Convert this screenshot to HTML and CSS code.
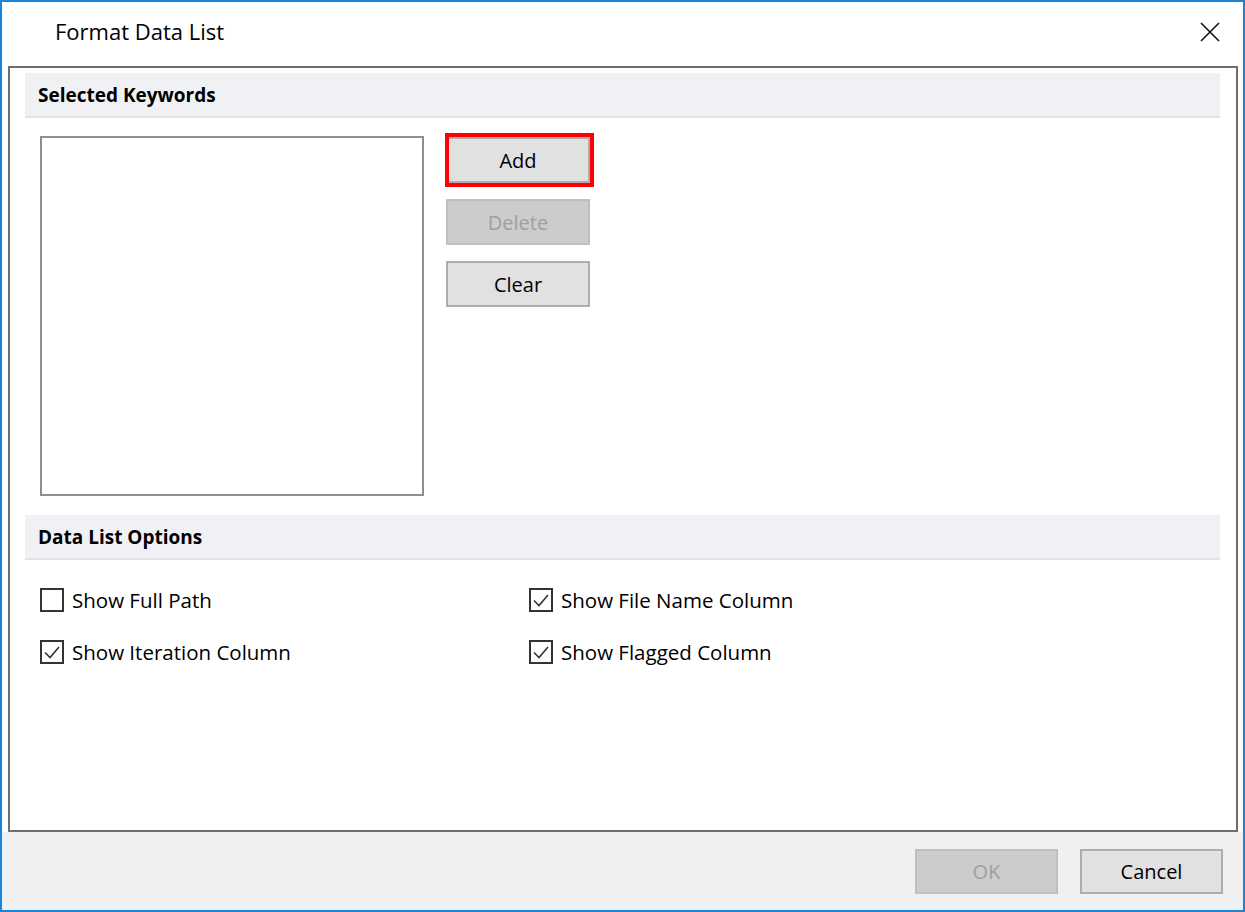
FILE: index.html
```html
<!DOCTYPE html>
<html lang="en">
<head>
    <meta charset="UTF-8">
    <title>Format Data List</title>
    <link rel="stylesheet" href="styles.css">
</head>
<body>
    <div class="window">
        <div class="titlebar">
            <span class="title">Format Data List</span>
            <svg class="close" width="22" height="22" viewBox="0 0 22 22">
                <path d="M2 2 L20 20 M20 2 L2 20" stroke="#111" stroke-width="1.6" fill="none"/>
            </svg>
        </div>

        <div class="frame">
            <div class="section-head">Selected Keywords</div>
            <div class="keywords">
                <div class="listbox"></div>
                <div class="btn-col">
                    <div class="highlight"><button class="btn">Add</button></div>
                    <button class="btn" disabled>Delete</button>
                    <button class="btn">Clear</button>
                </div>
            </div>

            <div class="section-head">Data List Options</div>
            <div class="options">
                <label class="check"><span class="box"></span>Show Full Path</label>
                <label class="check"><span class="box checked"><svg width="20" height="20" viewBox="0 0 20 20"><path d="M3 10.5 L8 15.5 L17 5" stroke="#333" stroke-width="1.6" fill="none"/></svg></span>Show File Name Column</label>
                <label class="check"><span class="box checked"><svg width="20" height="20" viewBox="0 0 20 20"><path d="M3 10.5 L8 15.5 L17 5" stroke="#333" stroke-width="1.6" fill="none"/></svg></span>Show Iteration Column</label>
                <label class="check"><span class="box checked"><svg width="20" height="20" viewBox="0 0 20 20"><path d="M3 10.5 L8 15.5 L17 5" stroke="#333" stroke-width="1.6" fill="none"/></svg></span>Show Flagged Column</label>
            </div>
        </div>

        <div class="footer">
            <button class="btn" disabled>OK</button>
            <button class="btn">Cancel</button>
        </div>
    </div>
</body>
</html>
```

FILE: styles.css
```css
/* Dialog shell */
body {
    margin: 0;
    font-family: "Open Sans", "Noto Sans", sans-serif;
    color: #000;
}

.window {
    width: 1245px;
    height: 912px;
    box-sizing: border-box;
    border: 2px solid #1a84d8;
    background-color: #fff;
    display: flex;
    flex-direction: column;
}

.titlebar {
    height: 64px;
    display: flex;
    align-items: center;
    justify-content: space-between;
    padding: 0 22px 6px 53px;
    box-sizing: border-box;
}

.title {
    font-size: 22px;
}

.close {
    margin-top: 2px;
}

/* Main bordered area */
.frame {
    height: 766px;
    box-sizing: border-box;
    margin: 0 5px 0 6px;
    border: 2px solid #6e6e6e;
    padding: 5px 16px 0 15px;
}

.section-head {
    height: 43px;
    background-color: #f0f1f5;
    border-bottom: 2px solid #e2e3e7;
    padding-left: 13px;
    font-weight: bold;
    font-size: 19px;
    line-height: 45px;
}

.keywords {
    display: flex;
    gap: 22px;
    padding: 18px 0 19px 15px;
}

.listbox {
    width: 380px;
    height: 356px;
    border: 2px solid #8b8f98;
}

.btn-col {
    display: flex;
    flex-direction: column;
    gap: 16px;
    padding-top: 1px;
}

/* Buttons */
.btn {
    width: 144px;
    height: 46px;
    background-color: #e1e1e1;
    border: 2px solid #adadad;
    font-family: inherit;
    font-size: 20px;
    color: #000;
    padding: 0;
}

.btn:disabled {
    background-color: #cccccc;
    border-color: #bfbfbf;
    color: #a0a0a0;
}

.highlight {
    position: relative;
    width: 144px;
    height: 46px;
}

.highlight::after {
    content: "";
    position: absolute;
    left: -1px;
    top: -4px;
    right: -4px;
    bottom: -4px;
    border: 4px solid #f00;
}

/* Checkbox grid */
.options {
    display: grid;
    grid-template-columns: 489px auto;
    row-gap: 28px;
    padding: 28px 0 0 15px;
}

.check {
    display: flex;
    align-items: center;
    gap: 8px;
    font-size: 20.5px;
    height: 24px;
}

.box {
    width: 24px;
    height: 24px;
    box-sizing: border-box;
    border: 2px solid #333;
    display: flex;
    align-items: center;
    justify-content: center;
    background-color: #fff;
}

/* Bottom button bar */
.footer {
    flex: 1;
    background-color: #f0f0f0;
    display: flex;
    justify-content: flex-end;
    gap: 22px;
    padding: 17px 20px 0 0;
}

.footer .btn {
    width: 143px;
    height: 45px;
}
```
